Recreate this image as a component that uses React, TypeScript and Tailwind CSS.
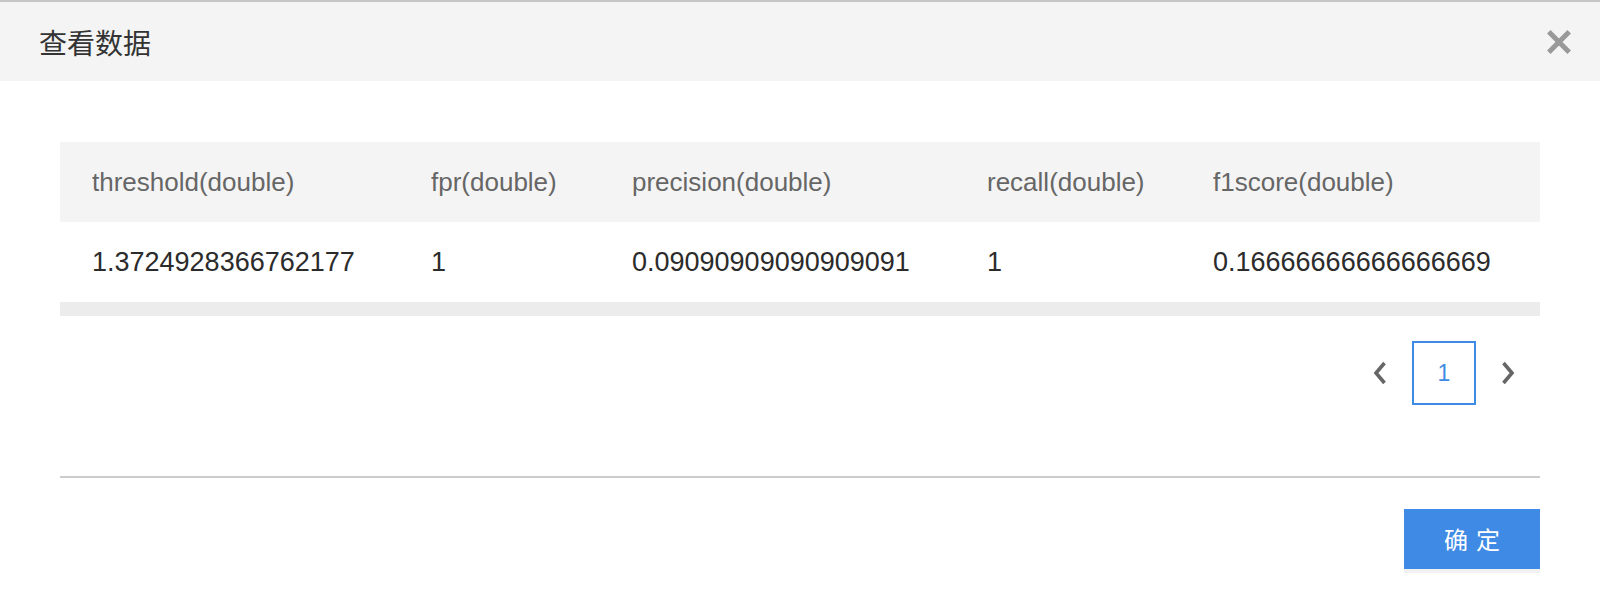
import React from 'react';

const columns = [
  { key: 'threshold', label: 'threshold(double)' },
  { key: 'fpr', label: 'fpr(double)' },
  { key: 'precision', label: 'precision(double)' },
  { key: 'recall', label: 'recall(double)' },
  { key: 'f1score', label: 'f1score(double)' },
];

const rows: Record<string, string>[] = [
  {
    threshold: '1.3724928366762177',
    fpr: '1',
    precision: '0.09090909090909091',
    recall: '1',
    f1score: '0.16666666666666669',
  },
];

const Chevron: React.FC<{ dir: 'left' | 'right' }> = ({ dir }) => (
  <svg width="14" height="26" viewBox="0 0 14 26" fill="none">
    <polyline
      points={dir === 'left' ? '11.5,3 3,13 11.5,23' : '2.5,3 11,13 2.5,23'}
      stroke="#666666"
      strokeWidth="3.6"
      fill="none"
    />
  </svg>
);

const App: React.FC = () => {
  return (
    <div className="w-full h-[596px] overflow-hidden bg-white border-t-2 border-[#c6c6c6] font-['Liberation_Sans','Noto_Sans_CJK_SC',sans-serif]">
      {/* Header */}
      <div className="h-[79px] bg-[#f4f4f4] flex items-center justify-between pl-[39px] pr-[29px]">
        <h2 className="text-[28px] text-[#333333] font-['Noto_Sans_CJK_SC',sans-serif] leading-none">查看数据</h2>
        <button className="w-6 h-6 flex items-center justify-center">
          <svg width="24" height="24" viewBox="0 0 24 24">
            <path d="M1.8 1.8 L22.2 22.2 M22.2 1.8 L1.8 22.2" stroke="#999999" strokeWidth="5" />
          </svg>
        </button>
      </div>

      {/* Body */}
      <div className="px-[60px] pt-[61px]">
        <div className="w-full">
          <div className="grid grid-cols-[339px_201px_355px_226px_1fr] h-[80px] bg-[#f4f4f4] items-center text-[26px] text-[#666666]">
            {columns.map((c) => (
              <div key={c.key} className="pl-[32px] whitespace-nowrap">{c.label}</div>
            ))}
          </div>
          {rows.map((r, i) => (
            <div key={i} className="grid grid-cols-[339px_201px_355px_226px_1fr] h-[80px] items-center text-[27px] text-[#2b2b2b]">
              {columns.map((c) => (
                <div key={c.key} className="pl-[32px] whitespace-nowrap">{r[c.key]}</div>
              ))}
            </div>
          ))}
          <div className="h-[14px] bg-[#ececec]" />
        </div>

        {/* Pagination */}
        <div className="flex justify-end mt-[25px]">
          <button className="w-16 h-16 flex items-center justify-center">
            <Chevron dir="left" />
          </button>
          <button className="w-16 h-16 flex items-center justify-center border-2 border-[#3d8be4] text-[#3d8be4] text-[23px]">
            1
          </button>
          <button className="w-16 h-16 flex items-center justify-center">
            <Chevron dir="right" />
          </button>
        </div>

        <div className="h-[2px] bg-[#cccccc] mt-[71px]" />

        <div className="flex justify-end mt-[31px]">
          <button className="w-[136px] h-[60px] bg-[#3f8ae5] text-white text-[24px] tracking-[8px] pl-[8px] font-['Noto_Sans_CJK_SC',sans-serif] shadow-[0_4px_0_#f2f2f2]">
            确定
          </button>
        </div>
      </div>
    </div>
  );
};

export default App;
